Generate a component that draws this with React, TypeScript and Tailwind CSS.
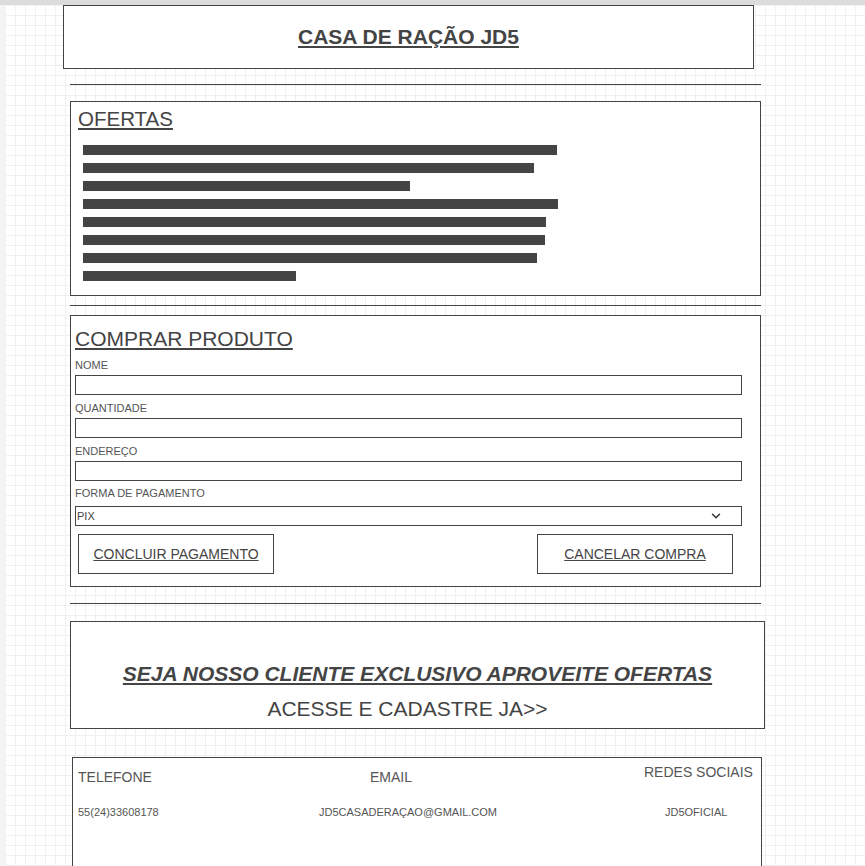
import { ChevronDown } from 'lucide-react';

const font = { fontFamily: '"Liberation Sans", Arial, sans-serif' };

const offerBars = [474, 451, 327, 475, 463, 462, 454, 213];

const fields = [
  { id: 'nome', label: 'NOME', mt: 'mt-[7px]' },
  { id: 'quantidade', label: 'QUANTIDADE', mt: 'mt-[6px]' },
  { id: 'endereco', label: 'ENDEREÇO', mt: 'mt-[6px]' },
];

const Divider = () => <div className="ml-[65px] w-[691px] h-px bg-[#444]" />;

const Field = ({ label, mt }: { label: string; mt: string }) => (
  <div className={mt}>
    <div className="pl-[4px] text-[11px] leading-[14px] text-[#555]">{label}</div>
    <div className="ml-[4px] mt-[3px] w-[667px] h-[20px] border border-[#444] bg-white" />
  </div>
);

const App = () => {
  return (
    <div className="w-[865px] h-[866px] overflow-hidden bg-white" style={font}>
      {/* Top strip */}
      <div className="h-[5px] bg-[#dcdcdc]" />

      <div className="flex flex-row min-h-[861px]">
        <div className="w-[5px] shrink-0 bg-[#f4f4f4]" />

        {/* Canvas with grid */}
        <div className="flex-1 flex flex-col items-start bg-white bg-[linear-gradient(to_right,#f0f0f0_1px,transparent_1px),linear-gradient(to_bottom,#f0f0f0_1px,transparent_1px)] bg-[size:10px_10px]">
          {/* Header */}
          <header className="shrink-0 ml-[58px] w-[691px] h-[64px] border border-[#444] bg-white flex items-center justify-center">
            <h1 className="text-[21px] leading-[24px] font-bold underline text-[#444]">CASA DE RAÇÃO JD5</h1>
          </header>

          <div className="mt-[15px]"><Divider /></div>

          {/* Ofertas */}
          <section className="shrink-0 mt-[16px] ml-[65px] w-[691px] h-[195px] border border-[#444] bg-white pt-[5px]">
            <h2 className="pl-[7px] text-[20.5px] leading-[24px] underline text-[#444]">OFERTAS</h2>
            <div className="mt-[14px] pl-[12px] flex flex-col gap-[8px]">
              {offerBars.map((w, i) => (
                <div key={i} className="h-[10px] bg-[#444]" style={{ width: w }} />
              ))}
            </div>
          </section>

          <div className="mt-[9px]"><Divider /></div>

          {/* Comprar produto */}
          <section className="shrink-0 mt-[9px] ml-[65px] w-[691px] h-[272px] border border-[#444] bg-white pt-[11px]">
            <h2 className="pl-[4px] text-[21px] leading-[24px] underline text-[#444]">COMPRAR PRODUTO</h2>

            {fields.map((f) => (
              <Field key={f.id} label={f.label} mt={f.mt} />
            ))}

            <div className="mt-[5px]">
              <div className="pl-[4px] text-[11px] leading-[14px] text-[#555]">FORMA DE PAGAMENTO</div>
              <div className="ml-[4px] mt-[6px] w-[667px] h-[20px] border border-[#444] bg-white flex items-center justify-between pl-[1px] pr-[18px]">
                <span className="text-[11px] leading-[14px] text-[#444]">PIX</span>
                <ChevronDown size={14} strokeWidth={2.5} className="text-[#333]" />
              </div>
            </div>

            <div className="mt-[8px] pl-[7px] pr-[27px] flex flex-row justify-between">
              <button className="w-[196px] h-[40px] border border-[#444] bg-white text-[14px] underline text-[#444]">
                CONCLUIR PAGAMENTO
              </button>
              <button className="w-[196px] h-[40px] border border-[#444] bg-white text-[14px] underline text-[#444]">
                CANCELAR COMPRA
              </button>
            </div>
          </section>

          <div className="mt-[16px]"><Divider /></div>

          {/* Banner */}
          <section className="shrink-0 mt-[17px] ml-[65px] w-[695px] h-[108px] border border-[#444] bg-white pt-[40px] flex flex-col items-center">
            <p className="text-[21px] leading-[24px] font-bold italic underline text-[#444]">
              SEJA NOSSO CLIENTE EXCLUSIVO APROVEITE OFERTAS
            </p>
            <p className="mt-[11px] pr-[20px] text-[21px] leading-[24px] text-[#444]">ACESSE E CADASTRE JA&gt;&gt;</p>
          </section>

          {/* Footer */}
          <footer className="shrink-0 mt-[28px] ml-[67px] w-[690px] h-[140px] border border-[#444] bg-white">
            <div className="pl-[5px] flex flex-row items-start text-[14px] leading-[16px] text-[#555]">
              <span className="mt-[11px] w-[292px]">TELEFONE</span>
              <span className="mt-[11px] w-[274px]">EMAIL</span>
              <span className="mt-[6px]">REDES SOCIAIS</span>
            </div>
            <div className="mt-[20px] pl-[5px] flex flex-row text-[11px] leading-[14px] text-[#555]">
              <span className="w-[241px]">55(24)33608178</span>
              <span className="w-[346px]">JD5CASADERAÇAO@GMAIL.COM</span>
              <span>JD5OFICIAL</span>
            </div>
          </footer>
        </div>
      </div>
    </div>
  );
};

export default App;
